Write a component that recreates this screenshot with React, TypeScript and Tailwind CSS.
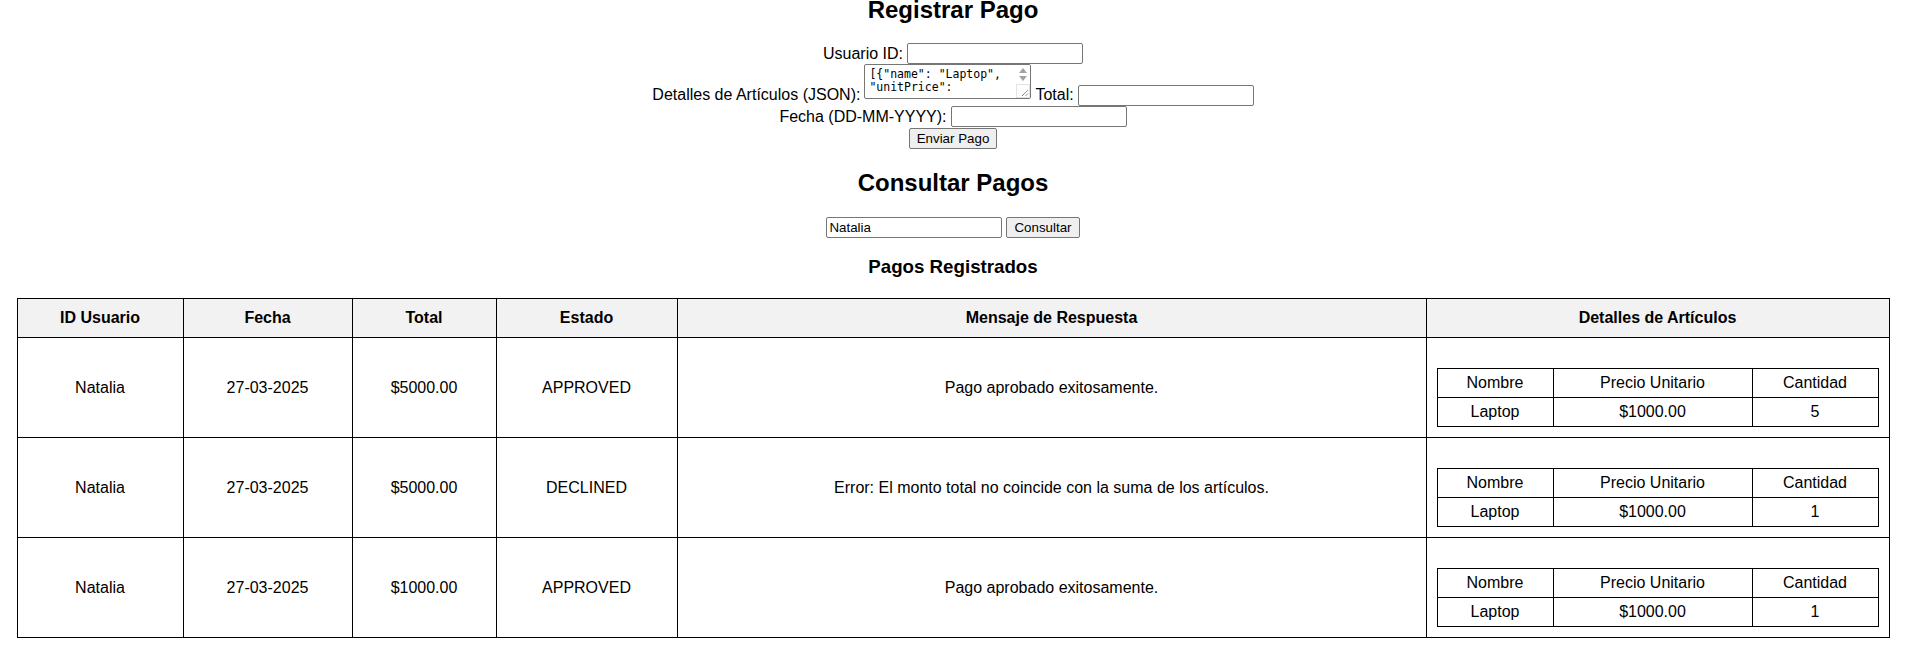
import React from 'react';

const rows = [
  { user: 'Natalia', date: '27-03-2025', total: '$5000.00', status: 'APPROVED', msg: 'Pago aprobado exitosamente.', qty: 5 },
  { user: 'Natalia', date: '27-03-2025', total: '$5000.00', status: 'DECLINED', msg: 'Error: El monto total no coincide con la suma de los artículos.', qty: 1 },
  { user: 'Natalia', date: '27-03-2025', total: '$1000.00', status: 'APPROVED', msg: 'Pago aprobado exitosamente.', qty: 1 },
];

const inputCls =
  'box-border h-[21px] w-[176px] rounded-[2px] border border-[#767676] bg-white px-[2px] text-[13.33px] leading-[normal] text-black outline-none';
const btnCls =
  'box-border h-[21px] rounded-[2px] border border-[#767676] bg-[#efefef] px-[7px] text-[13.33px] leading-[normal] text-black';

function FakeTextarea() {
  return (
    <div className="mb-[7px] box-border flex h-[35px] w-[167px] overflow-hidden rounded-[2px] border border-[#767676] bg-white text-left">
      <div className="flex-1 overflow-hidden whitespace-pre px-[4px] pt-[3px] font-['DejaVu_Sans_Mono',monospace] text-[11.5px] leading-[13px] text-black">
        {'[{"name": "Laptop",\n"unitPrice":'}
      </div>
      <svg width="14" height="33" viewBox="0 0 14 33" className="shrink-0">
        <rect width="14" height="33" fill="#fff" />
        <path d="M3 8 L7 3 L11 8 Z" fill="#a3a3a3" />
        <path d="M3 11 L7 16 L11 11 Z" fill="#a3a3a3" />
        <rect x="0.5" y="19.5" width="13" height="13" fill="#fff" stroke="#e3e3e3" />
        <path d="M12 25 L6 31 M12 28.5 L9.5 31" stroke="#8a8a8a" strokeWidth="1" />
      </svg>
    </div>
  );
}

export default function App() {
  return (
    <div className="min-h-[645px] overflow-hidden bg-white font-['Liberation_Sans',Arial,sans-serif] text-[16px] leading-[normal] text-black">
      <div className="flex flex-col items-center">
        <h2 className="-mt-[4px] h-[28px] text-[24px] font-bold leading-[28px]">Registrar Pago</h2>

        <div className="mt-[19px] flex h-[21px] items-center gap-[4px]">
          <span>Usuario ID:</span>
          <input className={inputCls} />
        </div>

        <div className="flex h-[42px] items-end gap-[4px]">
          <span className="mb-[2px]">Detalles de Artículos (JSON):</span>
          <FakeTextarea />
          <span className="mb-[2px]">Total:</span>
          <input className={inputCls} />
        </div>

        <div className="flex h-[21px] items-center gap-[4px]">
          <span>Fecha (DD-MM-YYYY):</span>
          <input className={inputCls} />
        </div>

        <button className={`mt-[1px] ${btnCls}`}>Enviar Pago</button>

        <h2 className="mt-[20px] h-[28px] text-[24px] font-bold leading-[28px]">Consultar Pagos</h2>

        <div className="mt-[20px] flex h-[21px] items-center gap-[4px]">
          <input className={inputCls} defaultValue="Natalia" />
          <button className={btnCls}>Consultar</button>
        </div>

        <h3 className="mt-[18px] h-[22px] text-[18.72px] font-bold leading-[22px]">Pagos Registrados</h3>
      </div>

      <table className="mx-auto mt-[20px] w-[1872px] table-fixed border-collapse text-center">
        <colgroup>
          <col className="w-[166px]" />
          <col className="w-[169px]" />
          <col className="w-[144px]" />
          <col className="w-[181px]" />
          <col className="w-[749px]" />
          <col className="w-[463px]" />
        </colgroup>
        <thead>
          <tr className="bg-[#f2f2f2]">
            {['ID Usuario', 'Fecha', 'Total', 'Estado', 'Mensaje de Respuesta', 'Detalles de Artículos'].map((h) => (
              <th key={h} className="border border-black p-[10px] font-bold">
                {h}
              </th>
            ))}
          </tr>
        </thead>
        <tbody>
          {rows.map((r, i) => (
            <tr key={i}>
              <td className="border border-black p-[10px]">{r.user}</td>
              <td className="border border-black p-[10px]">{r.date}</td>
              <td className="border border-black p-[10px]">{r.total}</td>
              <td className="border border-black p-[10px]">{r.status}</td>
              <td className="border border-black p-[10px]">{r.msg}</td>
              <td className="border border-black p-[10px]">
                <table className="mt-[20px] w-full table-fixed border-collapse">
                  <colgroup>
                    <col className="w-[116px]" />
                    <col className="w-[199px]" />
                    <col className="w-[126px]" />
                  </colgroup>
                  <tbody>
                    <tr>
                      <td className="border border-black p-[5px]">Nombre</td>
                      <td className="border border-black p-[5px]">Precio Unitario</td>
                      <td className="border border-black p-[5px]">Cantidad</td>
                    </tr>
                    <tr>
                      <td className="border border-black p-[5px]">Laptop</td>
                      <td className="border border-black p-[5px]">$1000.00</td>
                      <td className="border border-black p-[5px]">{r.qty}</td>
                    </tr>
                  </tbody>
                </table>
              </td>
            </tr>
          ))}
        </tbody>
      </table>
    </div>
  );
}
